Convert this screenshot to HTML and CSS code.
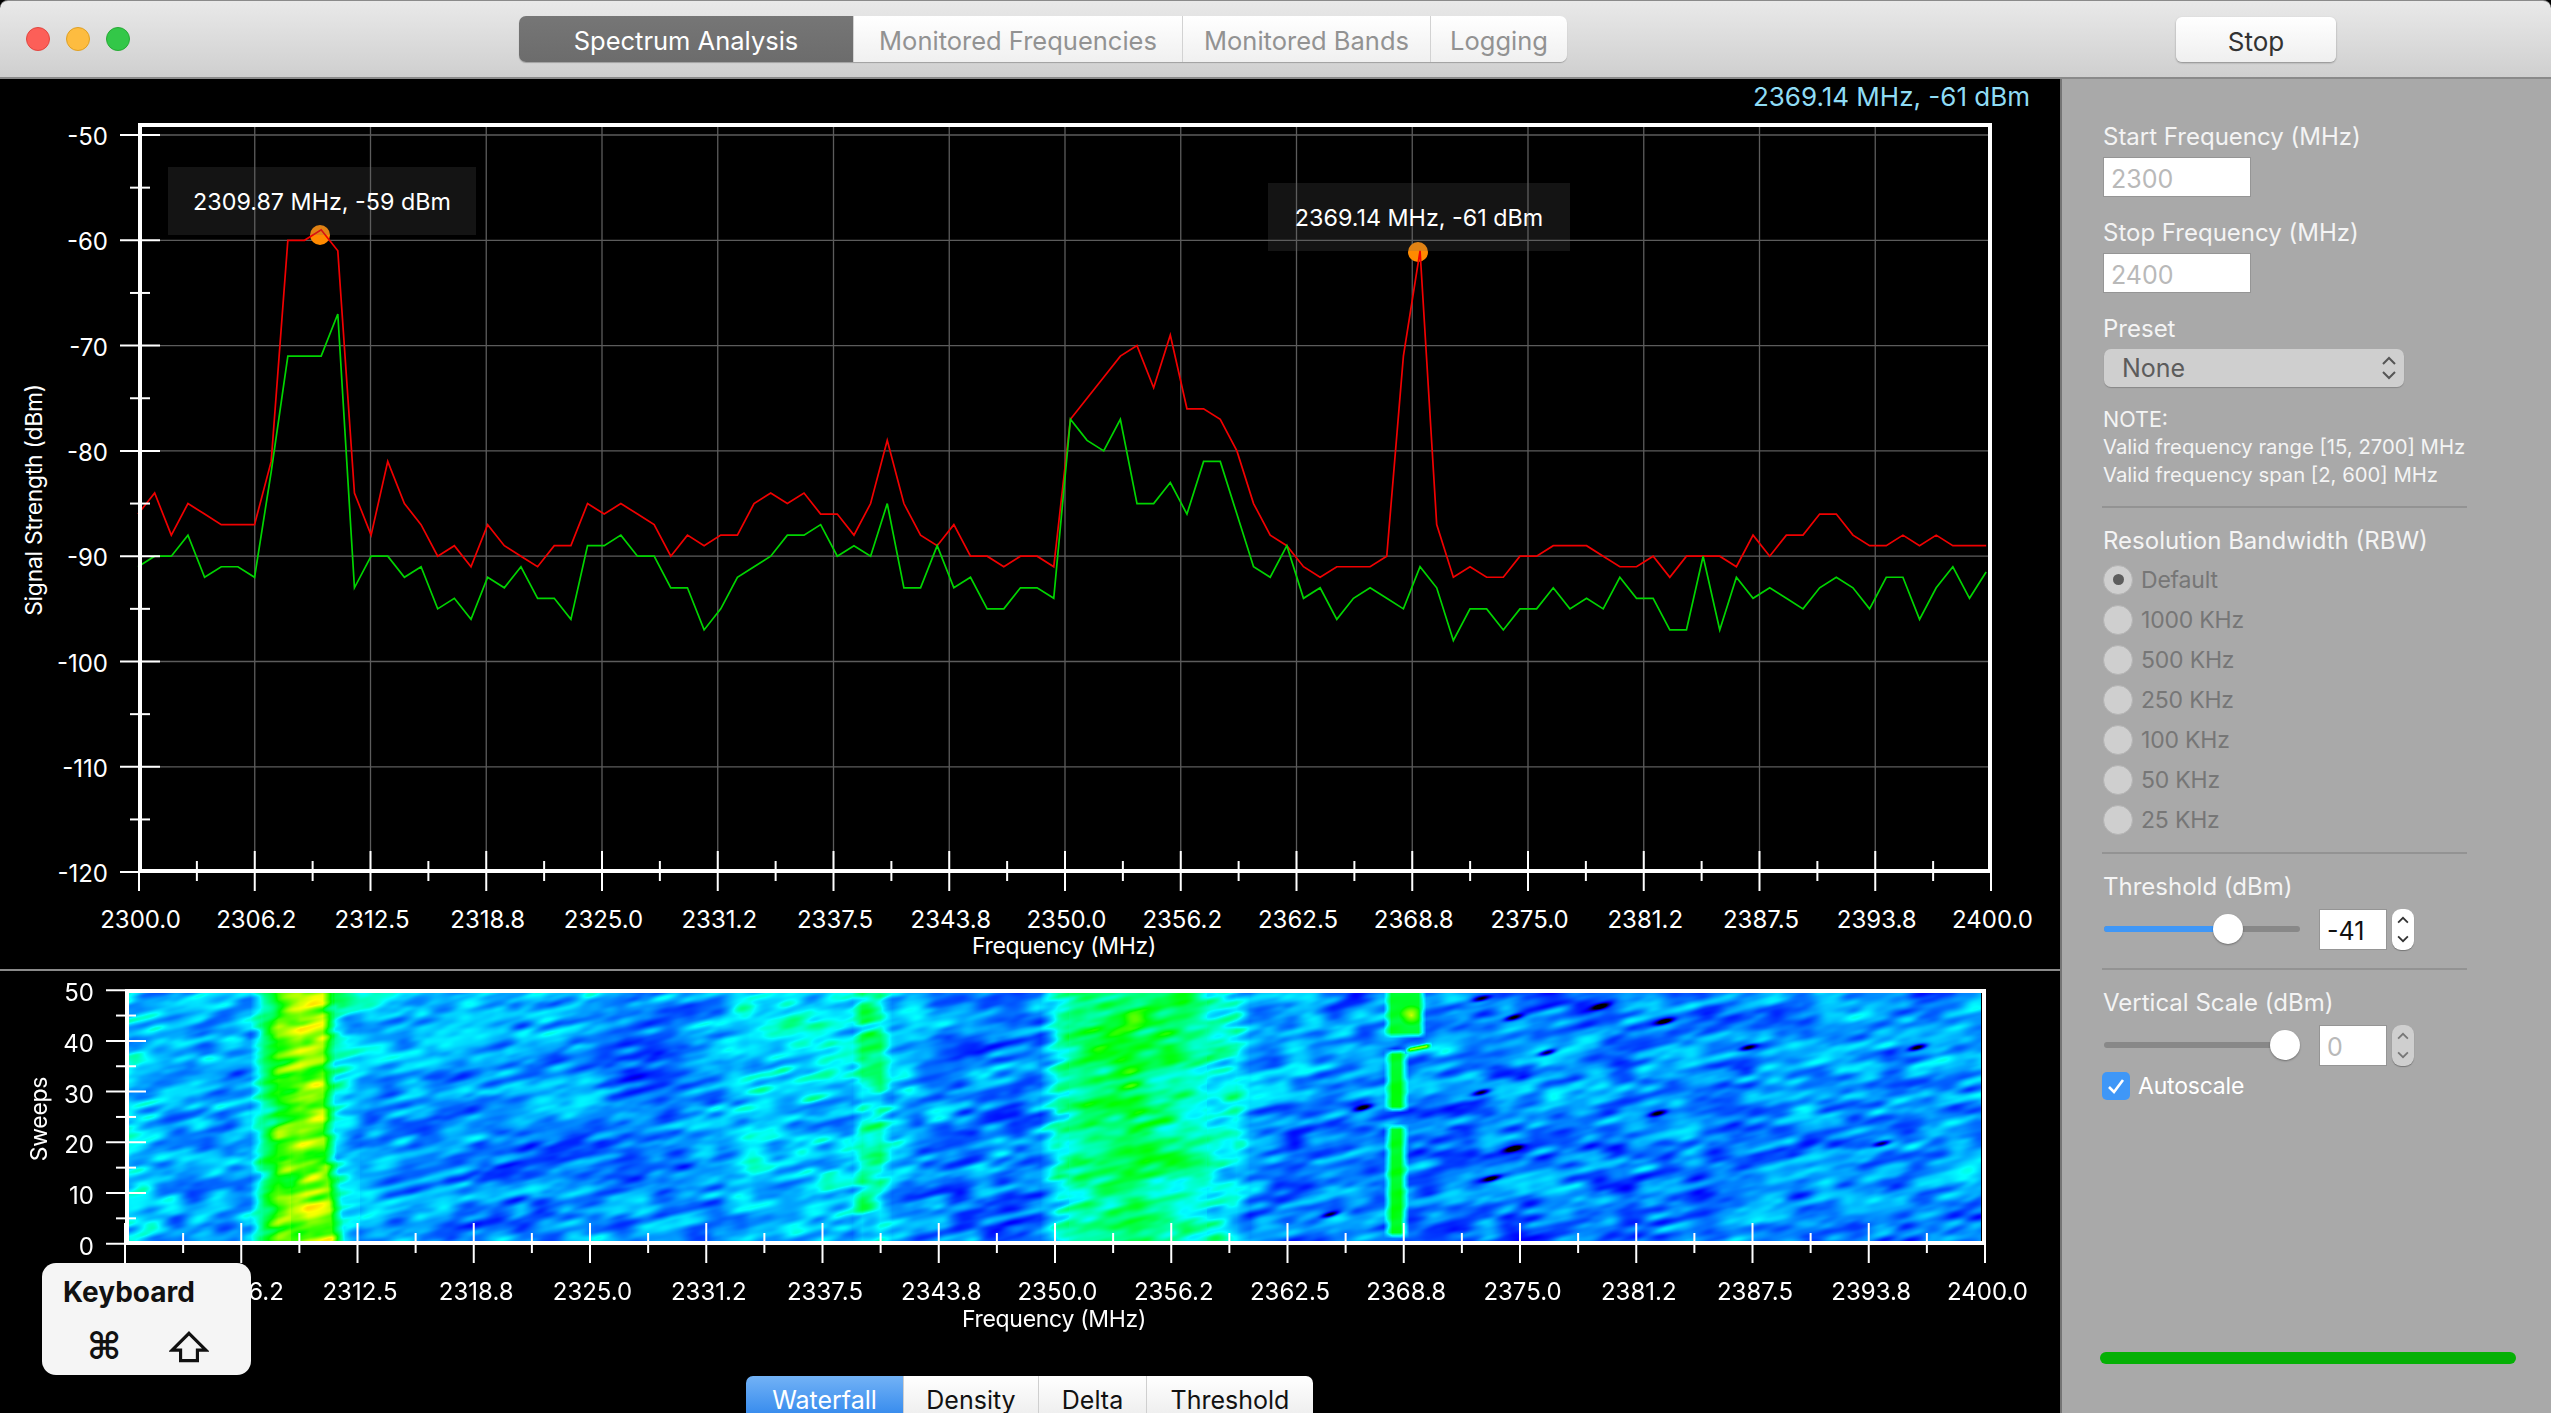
FILE: index.html
```html
<!DOCTYPE html>
<html lang="en">

<head>
  <meta charset="UTF-8" />
  <meta name="viewport" content="width=device-width, initial-scale=1.0" />
  <title>Spectrum Analysis</title>
  <link rel="stylesheet" href="styles.css">
</head>

<body>
  <header class="titlebar">
    <div class="lights">
      <span class="light red"></span>
      <span class="light yellow"></span>
      <span class="light green"></span>
    </div>
    <nav class="main-tabs">
      <div class="main-tab active">Spectrum Analysis</div>
      <div class="main-tab">Monitored Frequencies</div>
      <div class="main-tab">Monitored Bands</div>
      <div class="main-tab">Logging</div>
    </nav>
    <button class="stop-button">Stop</button>
  </header>

  <main class="content">
    <section class="plots">
      <div class="readout">2369.14 MHz, -61 dBm</div>
      <svg class="spectrum" id="spectrum" viewBox="0 123 2060 846"></svg>

      <div class="waterfall">
        <canvas class="heatmap" id="heatmap" width="1853" height="248"></canvas>
        <svg class="waterfall-axes" id="waterfallAxes" viewBox="0 971 2060 407"></svg>
      </div>

      <div class="view-tabs">
        <div class="view-tab active">Waterfall</div>
        <div class="view-tab">Density</div>
        <div class="view-tab">Delta</div>
        <div class="view-tab">Threshold</div>
      </div>

      <div class="keyboard">
        <div class="keyboard-title">Keyboard</div>
        <div class="keyboard-keys">
          <span class="command-key">⌘</span>
          <svg class="shift-key" viewBox="0 0 38 32">
            <path d="M19 3 L35 19 H27 V29 H11 V19 H3 Z" />
          </svg>
        </div>
      </div>
    </section>

    <aside class="sidebar">
      <div class="field-label first">Start Frequency (MHz)</div>
      <div class="text-input wide disabled">2300</div>
      <div class="field-label">Stop Frequency (MHz)</div>
      <div class="text-input wide disabled">2400</div>
      <div class="field-label">Preset</div>
      <div class="select">
        <span>None</span>
        <svg class="select-arrows" viewBox="0 0 16 26">
          <path d="M2 9 L8 3 L14 9 M2 17 L8 23 L14 17" />
        </svg>
      </div>

      <div class="note">
        <div>NOTE:</div>
        <div>Valid frequency range [15, 2700] MHz</div>
        <div>Valid frequency span [2, 600] MHz</div>
      </div>
      <div class="divider after-note"></div>

      <div class="section-label">Resolution Bandwidth (RBW)</div>
      <div class="radios">
        <div class="radio-row"><span class="radio checked"></span>Default</div>
        <div class="radio-row"><span class="radio"></span>1000 KHz</div>
        <div class="radio-row"><span class="radio"></span>500 KHz</div>
        <div class="radio-row"><span class="radio"></span>250 KHz</div>
        <div class="radio-row"><span class="radio"></span>100 KHz</div>
        <div class="radio-row"><span class="radio"></span>50 KHz</div>
        <div class="radio-row"><span class="radio"></span>25 KHz</div>
      </div>
      <div class="divider after-radios"></div>

      <div class="section-label">Threshold (dBm)</div>
      <div class="slider-row">
        <div class="slider">
          <div class="slider-fill threshold-fill"></div>
          <div class="slider-thumb threshold-thumb"></div>
        </div>
        <div class="text-input small">-41</div>
        <div class="stepper">
          <svg viewBox="0 0 22 42"><path d="M6 14 L11 9 L16 14 M6 28 L11 33 L16 28" /></svg>
        </div>
      </div>
      <div class="divider"></div>

      <div class="section-label">Vertical Scale (dBm)</div>
      <div class="slider-row">
        <div class="slider">
          <div class="slider-thumb scale-thumb"></div>
        </div>
        <div class="text-input small disabled">0</div>
        <div class="stepper disabled">
          <svg viewBox="0 0 22 42"><path d="M6 14 L11 9 L16 14 M6 28 L11 33 L16 28" /></svg>
        </div>
      </div>
      <div class="checkbox-row">
        <span class="checkbox">
          <svg viewBox="0 0 28 28"><path d="M7 15 L12 20 L21 8" /></svg>
        </span>
        Autoscale
      </div>

      <div class="progress"></div>
    </aside>
  </main>

  <script src="chart.js"></script>
</body>

</html>
```

FILE: styles.css
```css
* {
  margin: 0;
  padding: 0;
  box-sizing: border-box;
}

html,
body {
  height: 1413px;
  overflow: hidden;
  background: #000;
}

body {
  font-family: Inter, 'Liberation Sans', sans-serif;
  display: flex;
  flex-direction: column;
}

/* Title bar */
.titlebar {
  height: 79px;
  flex: none;
  position: relative;
  display: flex;
  align-items: flex-start;
  background: linear-gradient(#e9e9e9, #cfcfcf);
  border-top: 1px solid #8b8b8b;
  border-bottom: 2px solid #8a8a8a;
  border-radius: 8px 8px 0 0;
}

.lights {
  display: flex;
  gap: 16px;
  margin: 26px 0 0 26px;
  width: 493px;
}

.light {
  width: 24px;
  height: 24px;
  border-radius: 50%;
}

.light.red {
  background: #fc5f58;
  border: 1px solid #e2463f;
}

.light.yellow {
  background: #fdbc40;
  border: 1px solid #dfa023;
}

.light.green {
  background: #33c748;
  border: 1px solid #27aa35;
}

.main-tabs {
  display: grid;
  grid-template-columns: 334px 329px 248px 137px;
  height: 46px;
  margin-top: 15px;
  border-radius: 7px;
  overflow: hidden;
  box-shadow: 0 1px 1px rgba(0, 0, 0, 0.25);
}

.main-tab {
  display: flex;
  align-items: center;
  justify-content: center;
  padding-top: 2px;
  font-size: 25.5px;
  color: #929292;
  background: linear-gradient(#ffffff, #f0f0f0);
  border-left: 1px solid #d2d2d2;
}

.main-tab.active {
  color: #fff;
  background: linear-gradient(#767676, #6c6c6c);
  border-left: none;
}

.stop-button {
  width: 160px;
  height: 45px;
  margin: 16px 0 0 609px;
  padding-top: 3px;
  border: none;
  border-radius: 6px;
  font-family: inherit;
  font-size: 26px;
  color: #333;
  background: linear-gradient(#ffffff, #efefef);
  box-shadow: 0 1px 2px rgba(0, 0, 0, 0.35);
}

.content {
  flex: 1;
  display: flex;
  min-height: 0;
  overflow: hidden;
}

/* Plots */
.plots {
  width: 2060px;
  flex: none;
  position: relative;
  display: flex;
  flex-direction: column;
}

.readout {
  height: 44px;
  flex: none;
  padding-right: 30px;
  line-height: 35px;
  text-align: right;
  font-size: 26px;
  color: #8fdcf5;
}

.spectrum {
  display: block;
  width: 2060px;
  height: 846px;
  flex: none;
}

.waterfall {
  position: relative;
  height: 409px;
  flex: none;
  border-top: 2px solid #8a8a8a;
}

.heatmap {
  position: absolute;
  left: 128px;
  top: 22px;
}

.waterfall-axes {
  position: absolute;
  left: 0;
  top: 0;
  width: 2060px;
  height: 407px;
}

.axis-label {
  fill: #fff;
  font-size: 24px;
}

.axis-title {
  fill: #fff;
  font-size: 23px;
  letter-spacing: -0.3px;
}

.tip-label {
  fill: #fff;
  font-size: 23.3px;
}

.tip-box {
  fill: rgba(100, 100, 100, 0.2);
}

.grid-line {
  stroke: #5c5c5c;
  stroke-width: 1.3;
}

.tick {
  stroke: #fff;
  stroke-width: 2;
}

.frame {
  fill: none;
  stroke: #fff;
  stroke-width: 4;
}

.trace {
  fill: none;
  stroke-width: 1.7;
}

.trace-red {
  stroke: #f00000;
}

.trace-green {
  stroke: #00d400;
}

.peak {
  fill: #ff8a00;
}

.view-tabs {
  display: grid;
  grid-template-columns: 157px 135px 108px 167px;
  width: 567px;
  height: 44px;
  margin: -2px 0 0 746px;
  flex: none;
  border-radius: 7px 7px 0 0;
  overflow: hidden;
}

.view-tab {
  display: flex;
  align-items: center;
  justify-content: center;
  padding-top: 3px;
  font-size: 25px;
  color: #111;
  background: linear-gradient(#ffffff, #ececec);
  border-left: 1px solid #cfcfcf;
}

.view-tab.active {
  color: #fff;
  background: linear-gradient(#72b2f6, #2f86ec);
  border-left: none;
}

/* Floating keyboard hint */
.keyboard {
  position: absolute;
  left: 42px;
  top: 1184px;
  width: 209px;
  height: 112px;
  padding: 12px 0 0 21px;
  background: #f5f5f5;
  border-radius: 14px;
}

.keyboard-title {
  font-size: 28px;
  font-weight: 700;
  line-height: 34px;
  color: #111;
}

.keyboard-keys {
  display: flex;
  align-items: center;
  height: 40px;
  margin-top: 18px;
}

.command-key {
  width: 34px;
  margin-left: 24px;
  font-family: 'DejaVu Sans', sans-serif;
  font-size: 37px;
  font-weight: 700;
  line-height: 40px;
  color: #111;
}

.shift-key {
  width: 40px;
  height: 34px;
  margin-left: 48px;
  fill: none;
  stroke: #111;
  stroke-width: 3;
}

/* Right panel */
.sidebar {
  flex: 1;
  display: flex;
  flex-direction: column;
  padding-left: 41px;
  background: #a9a9a9;
  border-left: 2px solid #757575;
  color: #f4f4f4;
}

.field-label,
.section-label {
  height: 30px;
  line-height: 30px;
  font-size: 24px;
}

.field-label {
  margin-top: 21px;
}

.field-label.first {
  margin-top: 43px;
}

.text-input {
  display: flex;
  align-items: center;
  margin-top: 5px;
  padding: 3px 0 0 7px;
  background: #fff;
  border: 1px solid #959595;
  color: #111;
  font-size: 25px;
}

.text-input.wide {
  width: 148px;
  height: 40px;
}

.text-input.small {
  width: 68px;
  height: 41px;
  margin: 0;
}

.text-input.disabled {
  color: #b9b9b9;
}

.select {
  display: flex;
  align-items: center;
  justify-content: space-between;
  width: 300px;
  height: 38px;
  margin: 5px 0 0 1px;
  padding: 0 7px 0 18px;
  background: #cfcfcf;
  border-radius: 7px;
  box-shadow: 0 1px 1px rgba(0, 0, 0, 0.2);
  font-size: 25px;
  color: #5c5c5c;
}

.select-arrows {
  width: 16px;
  height: 26px;
  fill: none;
  stroke: #555;
  stroke-width: 2;
}

.note {
  margin-top: 19px;
  font-size: 20.3px;
  line-height: 28px;
}

.note div:first-child {
  font-size: 21.5px;
  line-height: 27px;
}

.divider {
  width: 365px;
  height: 2px;
  margin: 18px 0 18px -1px;
  background: #939393;
  flex: none;
}

.divider.after-note {
  margin-top: 17px;
}

.divider.after-radios {
  margin-top: 12.5px;
}

.radios {
  margin-top: 3.5px;
}

.radio-row {
  display: flex;
  align-items: center;
  gap: 8px;
  height: 40px;
  font-size: 23px;
  letter-spacing: -0.2px;
  color: #767676;
}

.radio {
  width: 30px;
  height: 30px;
  display: flex;
  align-items: center;
  justify-content: center;
  background: #cfcfcf;
  border: 1px solid #b4b4b4;
  border-radius: 50%;
}

.radio.checked::after {
  content: '';
  width: 11px;
  height: 11px;
  background: #5d5d5d;
  border-radius: 50%;
}

.slider-row {
  display: flex;
  align-items: center;
  height: 42px;
  margin-top: 6px;
}

.slider {
  position: relative;
  width: 196px;
  height: 6px;
  margin: 0 19px 0 1px;
  background: #888;
  border-radius: 3px;
}

.slider-fill {
  height: 6px;
  background: #3f97f7;
  border-radius: 3px 0 0 3px;
}

.threshold-fill {
  width: 124px;
}

.slider-thumb {
  position: absolute;
  top: -12px;
  width: 30px;
  height: 30px;
  background: #fff;
  border-radius: 50%;
  box-shadow: 0 1px 2px rgba(0, 0, 0, 0.35);
}

.threshold-thumb {
  left: 109px;
}

.scale-thumb {
  left: 166px;
}

.stepper {
  width: 22px;
  height: 41px;
  margin-left: 5px;
  background: #fff;
  border-radius: 9px;
  box-shadow: 0 1px 1px rgba(0, 0, 0, 0.3);
}

.stepper.disabled {
  background: #cfcfcf;
}

.stepper svg {
  display: block;
  width: 22px;
  height: 41px;
  fill: none;
  stroke: #333;
  stroke-width: 1.8;
}

.stepper.disabled svg {
  stroke: #777;
}

.checkbox-row {
  display: flex;
  align-items: center;
  gap: 8px;
  height: 28px;
  margin: 6px 0 0 -1px;
  font-size: 23px;
  letter-spacing: -0.2px;
  color: #fff;
}

.checkbox {
  width: 28px;
  height: 28px;
  background: #3f97f7;
  border-radius: 5px;
}

.checkbox svg {
  display: block;
  width: 28px;
  height: 28px;
  fill: none;
  stroke: #fff;
  stroke-width: 2.6;
}

.progress {
  width: 416px;
  height: 12px;
  flex: none;
  margin: auto 0 49px -3px;
  background: #05b005;
  border-radius: 6px;
}
```

FILE: chart.js
```js
const RED = [-86, -84, -88, -85, -86, -87, -87, -87, -81, -60, -60, -59, -61, -84, -88, -81,
  -85, -87, -90, -89, -91, -87, -89, -90, -91, -89, -89, -85, -86, -85, -86, -87,
  -90, -88, -89, -88, -88, -85, -84, -85, -84, -86, -86, -88, -85, -79, -85, -88,
  -89, -87, -90, -90, -91, -90, -90, -91, -77, -75, -73, -71, -70, -74, -69, -76,
  -76, -77, -80, -85, -88, -89, -91, -92, -91, -91, -91, -90, -71, -61, -87, -92,
  -91, -92, -92, -90, -90, -89, -89, -89, -90, -91, -91, -90, -92, -90, -90, -90,
  -91, -88, -90, -88, -88, -86, -86, -88, -89, -89, -88, -89, -88, -89, -89, -89];

const GREEN = [-91, -90, -90, -88, -92, -91, -91, -92, -82, -71, -71, -71, -67, -93, -90, -90,
  -92, -91, -95, -94, -96, -92, -93, -91, -94, -94, -96, -89, -89, -88, -90, -90,
  -93, -93, -97, -95, -92, -91, -90, -88, -88, -87, -90, -89, -90, -85, -93, -93,
  -89, -93, -92, -95, -95, -93, -93, -94, -77, -79, -80, -77, -85, -85, -83, -86,
  -81, -81, -86, -91, -92, -89, -94, -93, -96, -94, -93, -94, -95, -91, -93, -98,
  -95, -95, -97, -95, -95, -93, -95, -94, -95, -92, -94, -94, -97, -97, -90, -97,
  -92, -94, -93, -94, -95, -93, -92, -93, -95, -92, -92, -96, -93, -91, -94, -91.5];

const FREQ_LABELS = ["2300.0", "2306.2", "2312.5", "2318.8", "2325.0", "2331.2", "2337.5", "2343.8",
  "2350.0", "2356.2", "2362.5", "2368.8", "2375.0", "2381.2", "2387.5", "2393.8", "2400.0"];

function line(x1, y1, x2, y2, cls) {
  return `<line x1="${x1}" y1="${y1}" x2="${x2}" y2="${y2}" class="${cls}" />`;
}

function label(x, y, text, anchor, cls) {
  return `<text x="${x}" y="${y}" text-anchor="${anchor}" dominant-baseline="middle" class="${cls}">${text}</text>`;
}

function tooltip(x, y, w, text) {
  return `<rect x="${x}" y="${y}" width="${w}" height="68" class="tip-box" />` +
    label(x + w / 2, y + 37, text, "middle", "tip-label");
}

function drawSpectrum() {
  const dbY = (db) => 135 + (-50 - db) * 10.53;
  const tickX = (k) => 139 + k * 115.75;
  const pointX = (i) => 138 + i * 16.65;
  let svg = "";

  // grid
  for (let db = -50; db > -120; db -= 10) {
    svg += line(142, dbY(db), 1988, dbY(db), "grid-line");
  }
  for (let k = 1; k < 16; k++) {
    svg += line(tickX(k), 127, tickX(k), 869, "grid-line");
  }

  // peaks sit under the traces
  svg += `<circle cx="320" cy="235" r="10" class="peak" />`;
  svg += `<circle cx="1418" cy="252" r="10" class="peak" />`;

  const trace = (data) => data.map((db, i) => `${pointX(i)},${dbY(db)}`).join(" ");
  svg += `<polyline points="${trace(RED)}" class="trace trace-red" />`;
  svg += `<polyline points="${trace(GREEN)}" class="trace trace-green" />`;

  svg += tooltip(168, 167, 308, "2309.87 MHz, -59 dBm");
  svg += tooltip(1268, 183, 302, "2369.14 MHz, -61 dBm");

  // axes
  svg += `<rect x="140" y="125" width="1850" height="746" class="frame" />`;
  for (let db = -50; db >= -120; db -= 10) {
    svg += line(120, dbY(db), 160, dbY(db), "tick");
    svg += label(108, dbY(db) + 3.5, db, "end", "axis-label");
    if (db > -120) {
      svg += line(130, dbY(db - 5), 150, dbY(db - 5), "tick");
    }
  }
  FREQ_LABELS.forEach((text, k) => {
    svg += line(tickX(k), 851, tickX(k), 891, "tick");
    svg += label(tickX(k) + 1.5, 921, text, "middle", "axis-label");
    if (k < 16) {
      svg += line(tickX(k + 0.5), 861, tickX(k + 0.5), 881, "tick");
    }
  });
  svg += label(1064, 948, "Frequency (MHz)", "middle", "axis-title");
  svg += `<text transform="translate(36 500) rotate(-90)" text-anchor="middle" dominant-baseline="middle" class="axis-title">Signal Strength (dBm)</text>`;

  document.getElementById("spectrum").innerHTML = svg;
}

function drawWaterfallAxes() {
  const sweepY = (s) => 1243.7 - s * 5.07;
  const tickX = (k) => 125 + k * 116.25;
  let svg = `<rect x="127" y="991" width="1857" height="252" class="frame" />`;

  for (let s = 0; s <= 50; s += 10) {
    svg += line(106, sweepY(s), 146, sweepY(s), "tick");
    svg += label(94, sweepY(s) + 4.5, s, "end", "axis-label");
    if (s < 50) {
      svg += line(116, sweepY(s + 5), 136, sweepY(s + 5), "tick");
    }
  }
  FREQ_LABELS.forEach((text, k) => {
    svg += line(tickX(k), 1223, tickX(k), 1263, "tick");
    svg += label(tickX(k) + 2.5, 1293, text, "middle", "axis-label");
    if (k < 16) {
      svg += line(tickX(k + 0.5), 1233, tickX(k + 0.5), 1253, "tick");
    }
  });
  svg += label(1054, 1321, "Frequency (MHz)", "middle", "axis-title");
  svg += `<text transform="translate(41 1119) rotate(-90)" text-anchor="middle" dominant-baseline="middle" class="axis-title">Sweeps</text>`;

  document.getElementById("waterfallAxes").innerHTML = svg;
}

// heat map: band profile + streaky noise, mapped through the colour ramp
const PROFILE = [[128, 0.46], [170, 0.41], [250, 0.4], [264, 0.6], [278, 0.72], [300, 0.78], [322, 0.76],
  [335, 0.5], [360, 0.41], [500, 0.36], [580, 0.37], [640, 0.35], [720, 0.38], [750, 0.48], [820, 0.47],
  [852, 0.44], [862, 0.54], [880, 0.54], [892, 0.42], [960, 0.35], [1040, 0.34], [1058, 0.52], [1085, 0.6],
  [1130, 0.65], [1185, 0.6], [1215, 0.53], [1236, 0.49], [1250, 0.37], [1500, 0.35], [1981, 0.37]];

const RAMP = [[0, 0, 0, 0], [0.15, 0, 0, 190], [0.2, 0, 0, 255], [0.5, 0, 255, 255],
  [0.7, 0, 255, 0], [0.85, 255, 255, 0], [1, 255, 70, 0]];

const DARK_SPOTS = [[1600, 1006], [1513, 1017], [1664, 1021], [1547, 1052], [1748, 1047], [1917, 1047],
  [1657, 1113], [1882, 1143], [1513, 1148], [1491, 1178], [1363, 1107], [1481, 1092], [1330, 1214], [1481, 998]];

function hash(i, j) {
  const s = Math.sin(i * 127.1 + j * 311.7) * 43758.5453;
  return s - Math.floor(s);
}

function noise(x, y) {
  const xi = Math.floor(x);
  const yi = Math.floor(y);
  let fx = x - xi;
  let fy = y - yi;
  fx = fx * fx * (3 - 2 * fx);
  fy = fy * fy * (3 - 2 * fy);
  const top = hash(xi, yi) * (1 - fx) + hash(xi + 1, yi) * fx;
  const bottom = hash(xi, yi + 1) * (1 - fx) + hash(xi + 1, yi + 1) * fx;
  return top * (1 - fy) + bottom * fy;
}

function profileAt(x) {
  for (let i = 1; i < PROFILE.length; i++) {
    if (x <= PROFILE[i][0]) {
      const a = PROFILE[i - 1];
      const b = PROFILE[i];
      return a[1] + ((b[1] - a[1]) * (x - a[0])) / (b[0] - a[0]);
    }
  }
  return PROFILE[PROFILE.length - 1][1];
}

function rampColor(t) {
  t = Math.max(0, Math.min(1, t));
  for (let i = 1; i < RAMP.length; i++) {
    if (t <= RAMP[i][0]) {
      const a = RAMP[i - 1];
      const b = RAMP[i];
      const f = (t - a[0]) / (b[0] - a[0]);
      return [a[1] + (b[1] - a[1]) * f, a[2] + (b[2] - a[2]) * f, a[3] + (b[3] - a[3]) * f];
    }
  }
  return [255, 70, 0];
}

function edge(x, a, b, soft) {
  const left = Math.max(0, Math.min(1, (x - a) / soft));
  const right = Math.max(0, Math.min(1, (b - x) / soft));
  return left * right;
}

// the narrow carrier near 2369 MHz drops out for a few sweeps
function applyCarrier(t, x, y, grain) {
  if (x < 1378 || x > 1436) {
    return t;
  }
  let w = 0;
  let c = 0.68;
  if (y < 1040) {
    w = edge(x, 1383, 1426, 8) * edge(y, 985, 1038, 6);
    c = 0.66 + 0.17 * Math.max(0, 1 - Math.hypot((x - 1411) / 13, (y - 1015) / 11));
  } else if (y < 1054 && x > 1404) {
    const dy = y - (1050 - (x - 1405) * 0.2);
    w = edge(x, 1404, 1432, 6) * Math.exp(-dy * dy / 6);
    c = 0.78;
  } else {
    w = edge(x, 1383, 1409, 9) * (edge(y, 1048, 1112, 6) + edge(y, 1123, 1238, 6));
  }
  return t * (1 - w) + (c + grain) * w;
}

function drawHeatmap() {
  const canvas = document.getElementById("heatmap");
  const ctx = canvas.getContext("2d");
  const w = canvas.width;
  const h = canvas.height;
  const img = ctx.createImageData(w, h);
  const cos = Math.cos(0.24);
  const sin = Math.sin(0.24);

  for (let py = 0; py < h; py++) {
    for (let px = 0; px < w; px++) {
      const x = px + 128;
      const y = py + 993;
      const u = x * cos - y * sin;
      const v = x * sin + y * cos;

      // yellow band leans out a little in the newest sweeps
      const lean = x > 290 && x < 360 ? Math.max(0, (y - 1130) / 110) * 10 : 0;
      let t = profileAt(x - lean);
      const fine = noise(u / 24, v / 7) - 0.5;
      const damp = t > 0.55 ? 0.75 : 1;
      t += fine * 0.24 * damp;
      t += (noise(u / 13, v / 4.5) - 0.5) * 0.06 * damp;
      t += (noise(u / 90, v / 22) - 0.5) * 0.08 * damp;
      t += (noise(x / 170, y / 70) - 0.5) * 0.05;

      t = applyCarrier(t, x, y, fine * 0.05);

      for (const spot of DARK_SPOTS) {
        const dx = x - spot[0];
        const dy = y - spot[1];
        if (Math.abs(dx) < 20 && Math.abs(dy) < 10) {
          const along = (dx * cos - dy * sin) / 9;
          const across = (dx * sin + dy * cos) / 2.6;
          t -= 0.42 * Math.exp(-(along * along + across * across));
        }
      }

      const rgb = rampColor(t);
      const i = (py * w + px) * 4;
      img.data[i] = rgb[0];
      img.data[i + 1] = rgb[1];
      img.data[i + 2] = rgb[2];
      img.data[i + 3] = 255;
    }
  }
  ctx.putImageData(img, 0, 0);
}

drawSpectrum();
drawWaterfallAxes();
drawHeatmap();
```
